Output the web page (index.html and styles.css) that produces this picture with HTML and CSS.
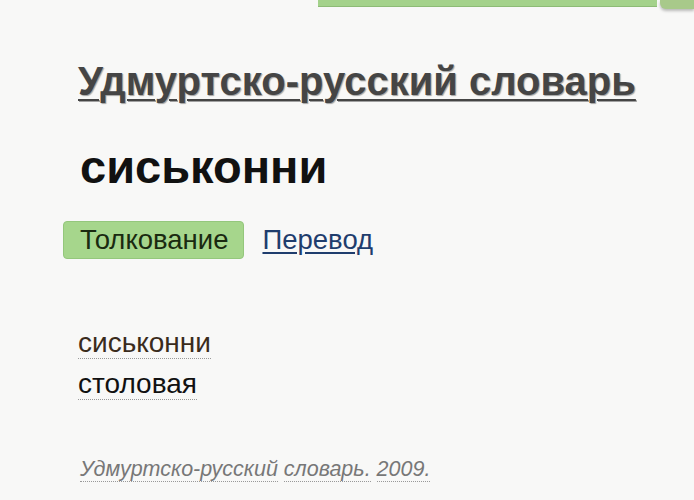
FILE: index.html
```html
<!DOCTYPE html>
<html lang="ru">
<head>
<meta charset="utf-8">
<link rel="stylesheet" href="styles.css">
</head>
<body>
<div class="topbar">
  <div class="topbar-main"></div>
  <div class="topbar-side"></div>
</div>
<main class="content">
  <h1 class="dict-title"><a href="#">Удмуртско-русский словарь</a></h1>
  <h2 class="word">сиськонни</h2>
  <div class="tabs">
    <span class="tab active">Толкование</span>
    <a class="tab link" href="#">Перевод</a>
  </div>
  <div class="entry">
    <div class="headword"><span class="dotted">сиськонни</span></div>
    <div class="meaning"><span class="dotted">столовая</span></div>
  </div>
  <div class="source">
    <span class="dotted">Удмуртско-русский</span> <span class="dotted">словарь.</span> <span class="dotted">2009.</span>
  </div>
</main>
</body>
</html>
```

FILE: styles.css
```css
html, body {
  margin: 0;
  padding: 0;
  background: #f8f8f7;
  font-family: "Liberation Sans", Arial, sans-serif;
}
.topbar {
  display: flex;
  height: 10px;
  padding-left: 318px;
  gap: 3px;
}
.topbar-main {
  width: 339px;
  height: 6px;
  background: #a4d28b;
  border-bottom: 1px solid #8dbb76;
}
.topbar-side {
  flex: 1;
  height: 9px;
  background: #a8c98a;
  border-bottom-left-radius: 6px;
  box-shadow: 0 2px 3px rgba(0,0,0,0.25);
}
.content {
  padding-left: 78px;
}
.dict-title {
  margin: 48px 0 0;
  font-size: 40px;
  font-weight: bold;
  line-height: 46px;
}
.dict-title a {
  color: #454545;
  text-decoration: underline;
  text-decoration-thickness: 2px;
  text-underline-offset: 4px;
  text-shadow: 1px 1px 1px rgba(0,0,0,0.35);
}
.word {
  margin: 36px 0 0 2px;
  font-size: 47px;
  font-weight: bold;
  line-height: 54px;
  color: #111;
}
.tabs {
  display: flex;
  align-items: center;
  gap: 18px;
  margin: 27px 0 0 -15px;
}
.tab {
  font-size: 27.5px;
  line-height: 36px;
}
.tab.active {
  background: #a6d68c;
  border: 1px solid #94c77c;
  border-radius: 4px;
  padding: 0 15px 0 16px;
  color: #1a2a10;
}
.tab.link {
  color: #1f3d6d;
  text-decoration: underline;
  text-underline-offset: 3px;
}
.entry {
  margin-top: 63px;
  font-size: 28px;
  line-height: 41px;
}
.headword { color: #3a2b1c; }
.meaning { color: #111; }
.dotted {
  border-bottom: 1px dotted #999;
}
.source {
  margin: 50px 0 0 2px;
  font-size: 21.5px;
  line-height: 30px;
  font-style: italic;
  color: #777;
}
```
